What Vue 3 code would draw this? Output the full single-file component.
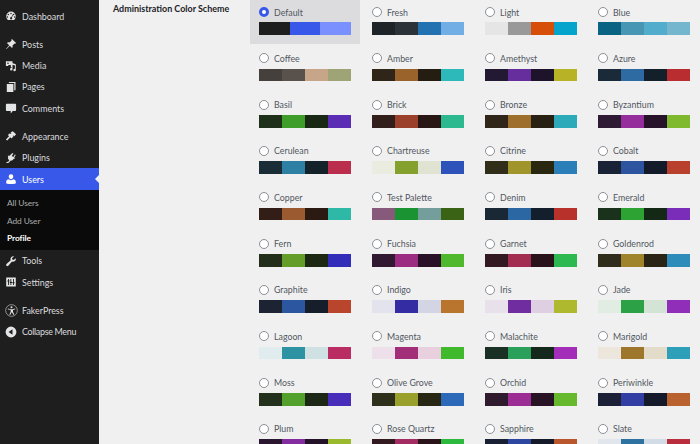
<script setup>
const groupA = [
  { name: 'Dashboard', icon: 'dashboard' },
]
const groupB = [
  { name: 'Posts', icon: 'posts' },
  { name: 'Media', icon: 'media' },
  { name: 'Pages', icon: 'pages' },
  { name: 'Comments', icon: 'comments' },
]
const groupC = [
  { name: 'Appearance', icon: 'appearance' },
  { name: 'Plugins', icon: 'plugins' },
]
const groupD = [
  { name: 'Tools', icon: 'tools' },
  { name: 'Settings', icon: 'settings' },
]
const schemes = [
  ['Default', ['#1e1e1e', '#3858e9', '#7b90ff']],
  ['Fresh', ['#1d2327', '#2c3338', '#2271b1', '#72aee6']],
  ['Light', ['#e5e5e5', '#999999', '#d64e07', '#04a4cc']],
  ['Blue', ['#096484', '#4796b3', '#52accc', '#74b6ce']],
  ['Coffee', ['#46403c', '#59524c', '#c7a589', '#9ea476']],
  ['Amber', ['#2f2519', '#9b632c', '#261d12', '#2db9b9']],
  ['Amethyst', ['#231932', '#662d9d', '#1d142b', '#b8b227']],
  ['Azure', ['#1b2a38', '#2e6ba3', '#132029', '#b92c30']],
  ['Basil', ['#1e2f1a', '#3f9e2a', '#192815', '#5a2db4']],
  ['Brick', ['#321e1b', '#9a402b', '#281715', '#2db98f']],
  ['Bronze', ['#2f2619', '#9e6e2d', '#292014', '#2daab9']],
  ['Byzantium', ['#2e1a32', '#952d9d', '#261329', '#7fb92d']],
  ['Cerulean', ['#1a2c36', '#2d7fa4', '#14222a', '#bb2d4c']],
  ['Chartreuse', ['#e9ecdf', '#84a02d', '#e0e3d1', '#2d52b9']],
  ['Citrine', ['#302d19', '#a0952b', '#29270f', '#2b7fb8']],
  ['Cobalt', ['#1a2336', '#2d549f', '#131a2a', '#b9402d']],
  ['Copper', ['#321e17', '#9c5a30', '#2a1a12', '#2db9a5']],
  ['Test Palette', ['#875a7b', '#1a9432', '#739e9b', '#3a6315']],
  ['Denim', ['#1a2836', '#2b67a3', '#141f2e', '#b8322b']],
  ['Emerald', ['#1a321c', '#2ca332', '#142816', '#7a2db9']],
  ['Fern', ['#222e19', '#649d28', '#1d2813', '#312db9']],
  ['Fuchsia', ['#321932', '#9b2c82', '#291228', '#50b82d']],
  ['Garnet', ['#321922', '#a32d50', '#2a121a', '#2db950']],
  ['Goldenrod', ['#302d1c', '#9f842c', '#292413', '#2d8cb9']],
  ['Graphite', ['#1c2433', '#2c569f', '#161d2b', '#b9462c']],
  ['Indigo', ['#e2e3ed', '#332ca3', '#d3d4e4', '#b9742d']],
  ['Iris', ['#e8e1ec', '#702d9f', '#ded0e2', '#afb92d']],
  ['Jade', ['#e1ece3', '#2da146', '#d3e4d6', '#902db9']],
  ['Lagoon', ['#e1ecee', '#2d93a3', '#d0e1e3', '#b92d62']],
  ['Magenta', ['#eee0ea', '#a22d78', '#e8d0de', '#40b92d']],
  ['Malachite', ['#1a3024', '#2ba05a', '#14281b', '#a32db9']],
  ['Marigold', ['#ece6dd', '#9f772c', '#e3dccb', '#2d9fb9']],
  ['Moss', ['#23301b', '#54a02c', '#1d2715', '#472db9']],
  ['Olive Grove', ['#2f301c', '#99a02c', '#262613', '#2d69b9']],
  ['Orchid', ['#301a2e', '#9c2d94', '#281424', '#66b92d']],
  ['Periwinkle', ['#1c2036', '#323ea3', '#151a2b', '#b9622d']],
  ['Plum', ['#2a162e', '#842da0', '#241229', '#9bb92d']],
  ['Rose Quartz', ['#321a20', '#a32d63', '#2b1419', '#2db93e']],
  ['Sapphire', ['#1a2034', '#2d47a0', '#141a2a', '#b9562d']],
  ['Slate', ['#e1e6ec', '#2d72a0', '#d2dce6', '#b92d3c']],
]
</script>

<template>
  <div class="page">
    <aside class="sidebar">
      <div class="group">
        <div v-for="item in groupA" :key="item.name" class="item">
          <span class="ico"><svg viewBox="0 0 20 20"><path d="M10 2.500a8 8 0 0 0-8 8c0 2.400 1 4.500 2.700 6h10.600a8 8 0 0 0 2.700-6 8 8 0 0 0-8-8zm0 2a1.200 1.200 0 1 1 0 2.400 1.200 1.200 0 0 1 0-2.400zM5.500 6.400a1.200 1.200 0 1 1 0 2.400 1.200 1.200 0 0 1 0-2.400zm9 0a1.200 1.200 0 1 1 0 2.400 1.200 1.200 0 0 1 0-2.400zM4 10.500a1.200 1.200 0 1 1 0 2.400 1.200 1.200 0 0 1 0-2.400zm12 0a1.200 1.200 0 1 1 0 2.400 1.200 1.200 0 0 1 0-2.400zM12.600 7.300l.9.5-2 4.700a1.800 1.800 0 1 1-1-.5z" fill-rule="evenodd" /></svg></span>
          {{ item.name }}
        </div>
      </div>
      <div class="group">
        <div v-for="item in groupB" :key="item.name" class="item">
          <span class="ico">
            <svg v-if="item.icon === 'posts'" viewBox="0 0 20 20"><path d="M11.500 1.500l7 7-1.500 1-1-.5-3.500 3.500c.5 1.700.2 3.200-.8 4.300L8 13l-5.500 5.500-.9-.1L7 12.200 3.200 8.300C4.300 7.300 5.800 7 7.500 7.500L11 4l-.5-1z" /></svg>
            <svg v-else-if="item.icon === 'media'" viewBox="0 0 20 20"><path d="M1.500 2h11v10H9.700v-3.500H5.500V10h-4zM5 4a1.300 1.300 0 1 0 0 2.600A1.300 1.300 0 0 0 5 4zm6 9.500V5.500h2l5 1.500v9.800a2 2 0 1 1-1.500-1.900V9l-4 -1v7.800a2 2 0 1 1-4-.3 2 2 0 0 1 2.500-2z" /></svg>
            <svg v-else-if="item.icon === 'pages'" viewBox="0 0 20 20"><path d="M6.500 1.500h11v14h-2V3.500H6.500zM3 5h11v13.500H3z" /></svg>
            <svg v-else viewBox="0 0 20 20"><path d="M3 3h14a1.500 1.500 0 0 1 1.500 1.500v9A1.500 1.500 0 0 1 17 15h-4l-3.500 4v-4H3a1.500 1.500 0 0 1-1.500-1.500v-9A1.500 1.500 0 0 1 3 3z" /></svg>
          </span>
          {{ item.name }}
        </div>
      </div>
      <div class="group">
        <div v-for="item in groupC" :key="item.name" class="item">
          <span class="ico">
            <svg v-if="item.icon === 'appearance'" viewBox="0 0 20 20"><path d="M13 2l5.500 5-3 3.300-1.500-1.300-1 .8 1.200 1.200-3.500 3-2-1.800-5 5.300-2.200-1.700 5.300-5.300-2-2 3.500-3 1.300 1.300 1-1-1.300-1.500z" /></svg>
            <svg v-else viewBox="0 0 20 20"><path d="M12.500 1.500l1.500 1-2.700 4 2.500 1.700 2.700-4 1.500 1-2.800 4 1.300 1-1 1.500-1-.5c-1.200 2.200-3.200 3.500-5.500 3.200l-1 1.500c-.5.800-1.800 2.800-5.500 2.600v-2c2 .1 3.300-.5 3.900-1.500l.9-1.500C4.700 12.500 4.500 10 5.500 8l-1-.8 1-1.500 1.500 1z" /></svg>
          </span>
          {{ item.name }}
        </div>
        <div class="item current">
          <span class="ico"><svg viewBox="0 0 20 20"><path d="M10 2a3.800 3.800 0 0 1 3.800 4c0 2.300-1.600 4.500-3.800 4.500S6.200 8.300 6.200 6A3.800 3.800 0 0 1 10 2zM6.500 10.500c.8 1 2.100 1.500 3.500 1.500s2.700-.5 3.500-1.500c2.400.3 4.500 1.700 4.500 4v2.500c0 .6-2.500 1.500-8 1.500S2 17.600 2 17v-2.500c0-2.300 2.100-3.700 4.500-4z" /></svg></span>
          Users
          <span class="notch"></span>
        </div>
        <div class="submenu">
          <div class="subitem">All Users</div>
          <div class="subitem">Add User</div>
          <div class="subitem strong">Profile</div>
        </div>
        <div v-for="item in groupD" :key="item.name" class="item">
          <span class="ico">
            <svg v-if="item.icon === 'tools'" viewBox="0 0 20 20"><path d="M18 5.500c.5 2-.3 4-2 5-1.400.8-3 .8-4.300.2L5.500 18c-1 1.100-2.300.8-3 .1-.8-.8-.9-2 0-2.900l7-6.500c-.7-1.500-.5-3.300.5-4.600 1.100-1.500 3-2.200 4.800-1.800L11.700 5.500l.6 2.200 2.200.6z" /></svg>
            <svg v-else viewBox="0 0 20 20"><path fill-rule="evenodd" d="M2 2.500h16v15H2zM5 5v2.500H4v1.500h1v6h1.500V9h1V7.500h-1V5zM13.500 5v5.500h-1V12h1v3H15v-3h1v-1.500h-1V5zM9 5v5H8v1.500h1V15h1.500v-3.500H12V10h-1.500V5z" /></svg>
          </span>
          {{ item.name }}
        </div>
      </div>
      <div class="group">
        <div class="item">
          <span class="ico faker"><svg viewBox="0 0 20 20"><circle cx="10" cy="10" r="9" fill="none" stroke="currentColor" stroke-width="0.900" /><circle cx="10" cy="5" r="1.500" /><path d="M4.500 6.800l4 1.200h3l4-1.200.3 1.200-3.500 1.300v2.700l2 4.300-1.200.5-2.400-4.300h-.4l-2.400 4.300-1.200-.5 2-4.300V9.300L4.200 8z" /></svg></span>
          FakerPress
        </div>
        <div class="item collapse">
          <span class="ico"><svg viewBox="0 0 20 20"><path fill-rule="evenodd" d="M10 1a9 9 0 1 1 0 18 9 9 0 0 1 0-18zM12.500 5.500L6 10l6.500 4.500z" /></svg></span>
          Collapse Menu
        </div>
      </div>
    </aside>
    <main class="main">
      <h2 class="heading">Administration Color Scheme</h2>
      <div class="schemes">
        <div v-for="(scheme, i) in schemes" :key="scheme[0]" class="scheme" :class="{ selected: i === 0 }">
          <div class="label">
            <span class="radio"></span>
            <span>{{ scheme[0] }}</span>
          </div>
          <div class="palette">
            <span v-for="c in scheme[1]" :key="c" class="chip" :style="{ background: c }"></span>
          </div>
        </div>
      </div>
    </main>
  </div>
</template>

<style scoped>
.page {
  display: flex;
  width: 700px;
  height: 444px;
  overflow: hidden;
  background: #f0f0f1;
  font-family: Lato, "Open Sans", sans-serif;
  font-size: 8.800px;
}
.sidebar {
  width: 99px;
  flex: none;
  background: #1e1e1e;
  color: #dcdcde;
  padding-top: 5.600px;
  display: flex;
  flex-direction: column;
  gap: 6.800px;
  font-size: 8.900px;
}
.item {
  height: 21.300px;
  display: flex;
  align-items: center;
  position: relative;
}
.collapse {
  letter-spacing: -0.300px;
}
.ico {
  width: 22px;
  flex: none;
  display: flex;
  justify-content: center;
}
.ico svg {
  width: 12px;
  height: 12px;
  fill: #e3e4e5;
  display: block;
}
.faker svg {
  width: 13px;
  height: 13px;
}
.current {
  background: #3858e9;
  color: #fff;
  height: 22px;
}
.current .ico svg {
  fill: #fff;
}
.notch {
  position: absolute;
  right: 0;
  top: 6.500px;
  border: 4.500px solid transparent;
  border-right-color: #f0f0f1;
  border-left-width: 0;
}
.submenu {
  background: #0a0a0a;
  height: 60px;
  padding-top: 4px;
  box-sizing: border-box;
}
.subitem {
  height: 17.500px;
  display: flex;
  align-items: center;
  padding-left: 7px;
  color: #a9abad;
  font-size: 8.400px;
  letter-spacing: -0.100px;
}
.strong {
  color: #fff;
  font-weight: 700;
}
.main {
  flex: 1;
  display: flex;
  align-items: flex-start;
  min-width: 0;
}
.heading {
  width: 151px;
  flex: none;
  margin: 3px 0 0;
  padding-left: 14px;
  box-sizing: border-box;
  font-size: 8.950px;
  line-height: 11px;
  font-weight: 700;
  color: #1d2327;
  white-space: nowrap;
}
.schemes {
  display: grid;
  grid-template-columns: repeat(4, 110px);
  grid-auto-rows: 44px;
  column-gap: 3px;
  row-gap: 2.330px;
  flex: none;
}
.scheme {
  padding: 6px 9px 0;
  box-sizing: border-box;
}
.selected {
  background: #dcdcde;
}
.label {
  display: flex;
  align-items: center;
  gap: 5px;
  height: 12px;
  color: #50575e;
}
.radio {
  width: 10px;
  height: 10px;
  border: 1px solid #8c8f94;
  border-radius: 50%;
  background: #fff;
  box-sizing: border-box;
  flex: none;
}
.selected .radio {
  border: 3px solid #3858e9;
}
.palette {
  display: flex;
  height: 12.700px;
  margin-top: 4.300px;
}
.chip {
  flex: 1;
}
</style>
